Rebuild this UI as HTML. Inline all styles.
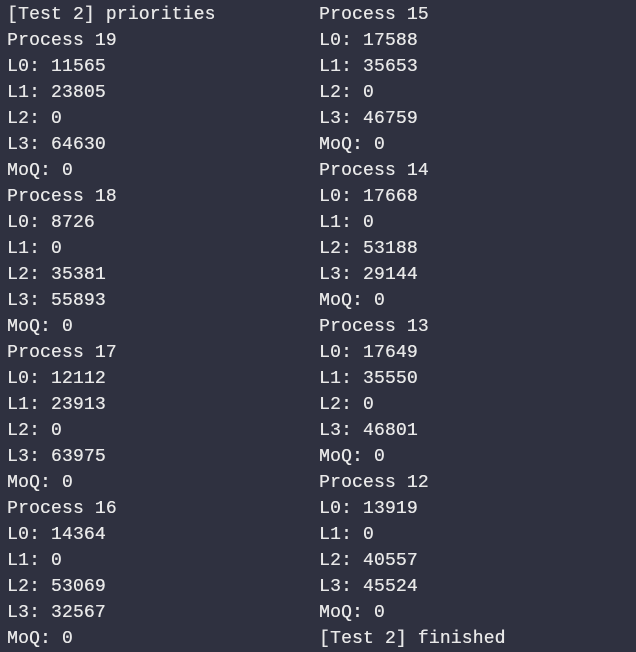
<!DOCTYPE html>
<html><head><style>
html,body{margin:0;padding:0;background:#2f3140;width:636px;height:652px;overflow:hidden}
.c{position:absolute;top:2px;font-family:"Liberation Mono",monospace;font-size:18px;letter-spacing:0.17px;line-height:26px;color:#e8e8e8;white-space:pre;text-shadow:0.3px 0 0 #e8e8e8}
</style></head><body>
<div class="c" style="left:7px">[Test 2] priorities
Process 19
L0: 11565
L1: 23805
L2: 0
L3: 64630
MoQ: 0
Process 18
L0: 8726
L1: 0
L2: 35381
L3: 55893
MoQ: 0
Process 17
L0: 12112
L1: 23913
L2: 0
L3: 63975
MoQ: 0
Process 16
L0: 14364
L1: 0
L2: 53069
L3: 32567
MoQ: 0</div>
<div class="c" style="left:319px">Process 15
L0: 17588
L1: 35653
L2: 0
L3: 46759
MoQ: 0
Process 14
L0: 17668
L1: 0
L2: 53188
L3: 29144
MoQ: 0
Process 13
L0: 17649
L1: 35550
L2: 0
L3: 46801
MoQ: 0
Process 12
L0: 13919
L1: 0
L2: 40557
L3: 45524
MoQ: 0
[Test 2] finished</div>
</body></html>
